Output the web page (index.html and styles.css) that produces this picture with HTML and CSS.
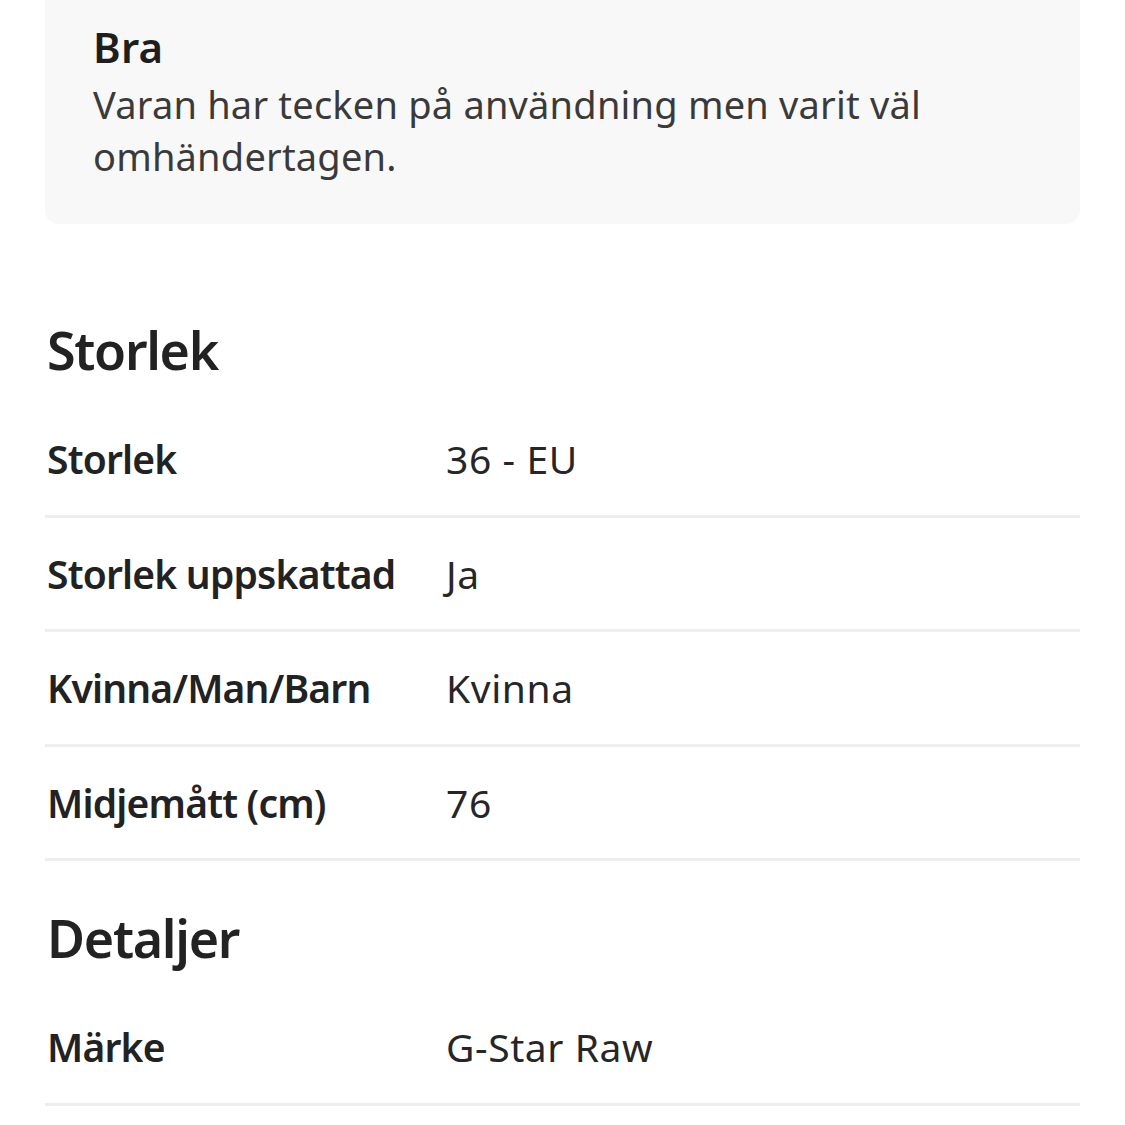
FILE: index.html
```html
<!DOCTYPE html>
<html lang="sv">
<head>
<meta charset="utf-8">
<title>Annons</title>
<link rel="stylesheet" href="styles.css">
</head>
<body>
<main class="page">
  <div class="condition-card">
    <div class="condition-title">Bra</div>
    <p class="condition-text">Varan har tecken på användning men varit väl omhändertagen.</p>
  </div>

  <section class="section section-first">
    <h2 class="section-title">Storlek</h2>
    <dl class="attr-list">
      <div class="attr-row"><dt class="attr-label">Storlek</dt><dd class="attr-value">36 - EU</dd></div>
      <div class="attr-row"><dt class="attr-label">Storlek uppskattad</dt><dd class="attr-value">Ja</dd></div>
      <div class="attr-row"><dt class="attr-label">Kvinna/Man/Barn</dt><dd class="attr-value">Kvinna</dd></div>
      <div class="attr-row"><dt class="attr-label">Midjemått (cm)</dt><dd class="attr-value">76</dd></div>
    </dl>
  </section>

  <section class="section">
    <h2 class="section-title">Detaljer</h2>
    <dl class="attr-list">
      <div class="attr-row"><dt class="attr-label">Märke</dt><dd class="attr-value">G-Star Raw</dd></div>
    </dl>
  </section>
</main>
</body>
</html>
```

FILE: styles.css
```css
* {
  box-sizing: border-box;
}

html, body {
  margin: 0;
  padding: 0;
  background: #ffffff;
}

body {
  font-family: "Noto Sans", "Liberation Sans", sans-serif;
  color: #222222;
  overflow: hidden;
}

.page {
  padding: 0 45px;
}

.condition-card {
  background: #f8f8f8;
  border-radius: 14px;
  margin-top: -30px;
  padding: 51px 48px 42px 48px;
}

.condition-title {
  font-size: 42px;
  font-weight: 600;
  line-height: 52px;
  letter-spacing: 0.2px;
  color: #1e1e1e;
}

.condition-text {
  margin: 5px 0 0;
  font-size: 38px;
  font-weight: 400;
  line-height: 52px;
  letter-spacing: 0.2px;
  color: #3a3a3a;
}

.section {
  margin-top: 43px;
}

.section-first {
  margin-top: 92px;
}

.section-title {
  margin: 0 0 19px;
  padding-left: 2px;
  font-size: 52px;
  font-weight: 600;
  line-height: 68px;
  letter-spacing: -1.3px;
  color: #222222;
}

.attr-list {
  margin: 0;
}

.attr-row {
  display: grid;
  grid-template-columns: 401px 1fr;
  padding: 31px 0 30.5px;
  border-bottom: 3px solid #eeeeee;
  font-size: 39px;
  line-height: 50px;
}

.attr-label {
  padding-left: 2px;
  font-weight: 600;
  letter-spacing: -0.8px;
  color: #222222;
}

.attr-value {
  margin: 0;
  font-weight: 400;
  letter-spacing: 0.6px;
  color: #262626;
}
```
